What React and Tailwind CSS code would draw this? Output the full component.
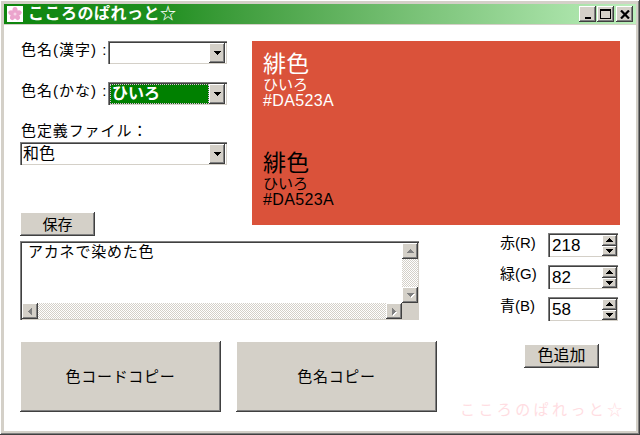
const FONT = "font-['Liberation_Sans','Noto_Sans_CJK_JP',sans-serif]";
const RAISED = "bg-[#d4d0c8] shadow-[inset_-1px_-1px_0_#404040,inset_1px_1px_0_#ffffff,inset_-2px_-2px_0_#808080]";
const SUNKEN = "shadow-[inset_1px_1px_0_#808080,inset_2px_2px_0_#404040,inset_-1px_-1px_0_#d4d0c8]";
const TRACK = "bg-[repeating-conic-gradient(#d4d0c8_0_25%,#ffffff_0_50%)] bg-[length:2px_2px]";

function Tri({ dir = "down", color = "#000", ghost = false }) {
  const pts = {
    down: "0,0 7,0 3.5,4",
    up: "0,4 7,4 3.5,0",
    left: "4,0 4,7 0,3.5",
    right: "0,0 0,7 4,3.5",
  }[dir];
  const horizontal = dir === "left" || dir === "right";
  return (
    <svg width={horizontal ? 4 : 7} height={horizontal ? 7 : 4} viewBox={horizontal ? "0 0 4 7" : "0 0 7 4"} className="block overflow-visible" shapeRendering="crispEdges">
      {ghost && <polygon points={pts} fill="#ffffff" transform="translate(1 1)" />}
      <polygon points={pts} fill={color} />
    </svg>
  );
}

function ArrowBox({ dir, ghost, className = "w-4 h-4", color }) {
  return (
    <div className={`${RAISED} ${className} flex items-center justify-center shrink-0`}>
      <Tri dir={dir} ghost={ghost} color={color} />
    </div>
  );
}

function Select({ className, value, focused }) {
  return (
    <div className={`${SUNKEN} ${className} h-[23px] bg-white flex items-stretch pl-[2px] pr-[2px] pt-[2px] pb-[1px]`}>
      <div className={`flex-1 min-w-0 flex items-center text-[16px] leading-none ${focused ? "bg-[#008000] text-white font-bold border border-dotted border-[#e4b0e4] pl-[1px]" : "pl-[1px] text-black"}`}>
        {value}
      </div>
      <ArrowBox dir="down" className="w-4 h-auto" />
    </div>
  );
}

function Spin({ value }) {
  return (
    <div className={`${SUNKEN} w-[70px] h-6 bg-white flex items-stretch p-[2px] pb-[1px] pr-[1px]`}>
      <div className="flex-1 flex items-center pl-[2px] text-[17px] leading-none text-black">{value}</div>
      <div className="w-[15px] flex flex-col">
        <ArrowBox dir="up" className="w-full flex-1" />
        <ArrowBox dir="down" className="w-full flex-1" />
      </div>
    </div>
  );
}

function Flower() {
  const petals = [0, 72, 144, 216, 288];
  return (
    <div className="w-4 h-4 bg-white flex items-center justify-center shrink-0">
      <svg width="14" height="14" viewBox="0 0 14 14">
        {petals.map((a) => (
          <ellipse key={a} cx="7" cy="3.5" rx="2.6" ry="3.4" fill="#eba4cd" transform={`rotate(${a} 7 7)`} />
        ))}
        <circle cx="7" cy="7" r="1.5" fill="#f6d3e6" />
      </svg>
    </div>
  );
}

function TitleBtn({ children }) {
  return <div className={`${RAISED} w-[17px] h-4 flex items-center justify-center`}>{children}</div>;
}

function ColorBlock({ className }) {
  return (
    <div className={className}>
      <div className="text-[23px] leading-[28px] tracking-[0.3px]">緋色</div>
      <div className="text-[15px] leading-[16px] -mt-[1px]">ひいろ</div>
      <div className="text-[16px] leading-[16px] tracking-[0.35px]">#DA523A</div>
    </div>
  );
}

export default function App() {
  return (
    <div className={`${FONT} w-[640px] h-[435px] relative overflow-hidden bg-[#d4d0c8] shadow-[inset_-1px_-1px_0_#404040,inset_1px_1px_0_#ffffff,inset_-2px_-2px_0_#808080] p-[4px] pr-[4px] flex flex-col text-black`}>
      <div className="h-5 shrink-0 bg-gradient-to-r from-[#0d850d] via-[#1f8f1f] via-[25%] to-[#bcefbc] flex items-center pl-[3px] pr-[3px]">
        <Flower />
        <span className="ml-[5px] text-[16px] leading-none font-bold text-white tracking-[0.5px] whitespace-nowrap">こころのぱれっと☆</span>
        <div className="ml-auto flex items-center">
          <TitleBtn>
            <div className="w-[6px] h-[2px] bg-black mt-[7px]" />
          </TitleBtn>
          <div className="ml-[1px]">
            <TitleBtn>
              <div className="w-[11px] h-[10px] border border-black border-t-2" />
            </TitleBtn>
          </div>
          <div className="ml-[2px]">
            <TitleBtn>
              <svg width="10" height="9" viewBox="0 0 10 9">
                <path d="M1 0.5 L9 8.5 M9 0.5 L1 8.5" stroke="#000" strokeWidth="2.2" />
              </svg>
            </TitleBtn>
          </div>
        </div>
      </div>

      <div className="flex-1 mt-[1px] bg-white relative flex flex-col pl-4 pt-4">
        <div className="flex h-[192px] shrink-0">
          <div className="w-[207px] shrink-0">
            <div className="flex items-center h-[23px]">
              <span className="w-[88px] pl-[1px] text-[15px] leading-none whitespace-nowrap tracking-[1px] pb-[6px]">色名(漢字) :</span>
              <Select className="w-[119px]" value="" />
            </div>
            <div className="flex items-center h-[23px] mt-[18px]">
              <span className="w-[88px] pl-[1px] text-[15px] leading-none whitespace-nowrap tracking-[1px] pb-[6px]">色名(かな) :</span>
              <Select className="w-[119px]" value="ひいろ" focused />
            </div>
            <div className="mt-[18px] pl-[1px] text-[15px] leading-[16px] tracking-[0.9px] whitespace-nowrap">色定義ファイル：</div>
            <Select className="w-[207px] mt-[3px]" value="和色" />
            <button className={`${RAISED} block w-[75px] h-6 mt-[47px] text-[15px] leading-none`}>保存</button>
          </div>
          <div className="ml-[25px] w-[368px] h-[184px] bg-[#da523a] pl-[11px] pt-[9px]">
            <ColorBlock className="text-white" />
            <ColorBlock className="text-black mt-[40px]" />
          </div>
        </div>

        <div className="flex">
          <div className="w-[417px] shrink-0 pt-[8px]">
            <div className={`${SUNKEN} w-[399px] h-[79px] bg-white flex flex-col pl-[2px] pt-[2px] relative`}>
              <div className="flex flex-1 min-h-0">
                <div className="flex-1 text-[15px] leading-[18px] pl-[6px] tracking-[0.8px]">アカネで染めた色</div>
                <div className={`w-[16px] flex flex-col justify-between ${TRACK}`}>
                  <ArrowBox dir="up" color="#808080" />
                  <ArrowBox dir="down" color="#808080" ghost />
                </div>
                <div className="w-[1px]" />
              </div>
              <div className="flex h-4 mb-[1px]">
                <ArrowBox dir="left" color="#808080" />
                <div className={`flex-1 ${TRACK}`} />
                <ArrowBox dir="right" color="#808080" ghost />
                <div className="w-[17px] bg-[#d4d0c8]" />
              </div>
            </div>
            <div className="flex mt-[21px] gap-[15px]">
              <button className={`${RAISED} w-[201px] h-[71px] text-[15px] leading-none tracking-[0.7px]`}>色コードコピー</button>
              <button className={`${RAISED} w-[201px] h-[71px] text-[15px] leading-none tracking-[0.7px]`}>色名コピー</button>
            </div>
          </div>
          <div className="flex-1 pl-[64px]">
            <div className="grid grid-cols-[47px_70px] gap-y-2 items-center">
              <span className="text-[15px] leading-none pb-[6px] -ml-[1px] whitespace-nowrap">赤(R)</span>
              <Spin value="218" />
              <span className="text-[15px] leading-none pb-[7px] -ml-[1px] whitespace-nowrap">緑(G)</span>
              <Spin value="82" />
              <span className="text-[15px] leading-none pb-[7px] -ml-[1px] whitespace-nowrap">青(B)</span>
              <Spin value="58" />
            </div>
            <button className={`${RAISED} block ml-[23px] mt-[23px] w-[75px] h-6 text-[16px] leading-none`}>色追加</button>
          </div>
        </div>

        <div className="absolute left-[456px] top-[377px] text-[15px] leading-none text-[#ffdde2] tracking-[3.4px] whitespace-nowrap">こころのぱれっと☆</div>
      </div>
    </div>
  );
}
